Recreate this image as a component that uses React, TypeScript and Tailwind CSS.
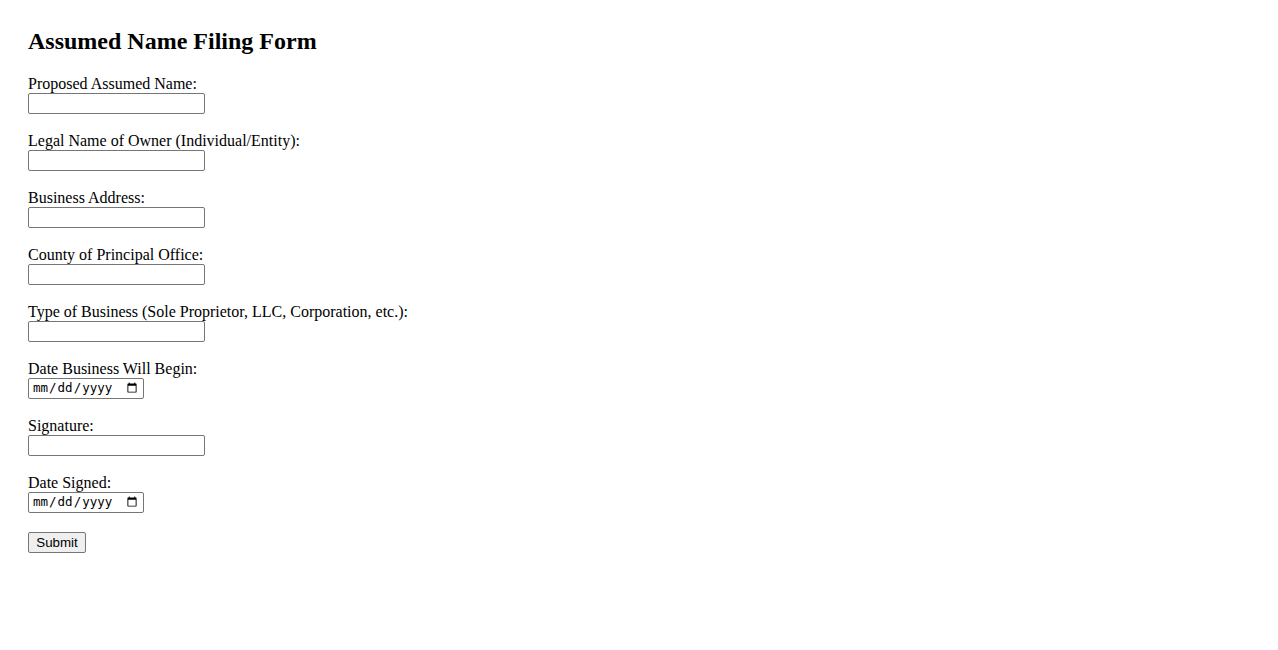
import React from "react";

const fields: { label: string; type: "text" | "date" }[] = [
  { label: "Proposed Assumed Name:", type: "text" },
  { label: "Legal Name of Owner (Individual/Entity):", type: "text" },
  { label: "Business Address:", type: "text" },
  { label: "County of Principal Office:", type: "text" },
  { label: "Type of Business (Sole Proprietor, LLC, Corporation, etc.):", type: "text" },
  { label: "Date Business Will Begin:", type: "date" },
  { label: "Signature:", type: "text" },
  { label: "Date Signed:", type: "date" },
];

export default function App() {
  return (
    <div className="min-h-[650px] bg-white text-black pl-[28px] pt-[28px] font-['Liberation_Serif',serif]">
      <h2 className="text-[24px] font-bold leading-[27.6px] mb-[19.5px]">Assumed Name Filing Form</h2>
      <form onSubmit={(e) => e.preventDefault()} className="flex flex-col items-start">
        {fields.map((f, i) => (
          <div key={i} className="flex flex-col items-start mb-[18px]">
            <label className="block text-[16px] leading-[18px] h-[18px]">{f.label}</label>
            {f.type === "text" ? (
              <input
                type="text"
                className="block w-[177px] h-[21px] border border-[#767676] rounded-[2px] px-[2px] text-[13.33px] font-['Liberation_Sans',sans-serif] bg-white"
              />
            ) : (
              <input
                type="date"
                className="block w-[116px] h-[21px] border border-[#767676] rounded-[2px] pl-[3px] pr-[3px] text-[12.5px] font-['DejaVu_Sans_Mono',monospace] bg-white"
              />
            )}
          </div>
        ))}
        <button
          type="submit"
          className="mt-[1px] w-[58px] h-[21px] border border-[#767676] rounded-[2px] bg-[#efefef] text-[13.33px] leading-[15px] font-['Liberation_Sans',sans-serif] text-black px-[6px]"
        >
          Submit
        </button>
      </form>
    </div>
  );
}
